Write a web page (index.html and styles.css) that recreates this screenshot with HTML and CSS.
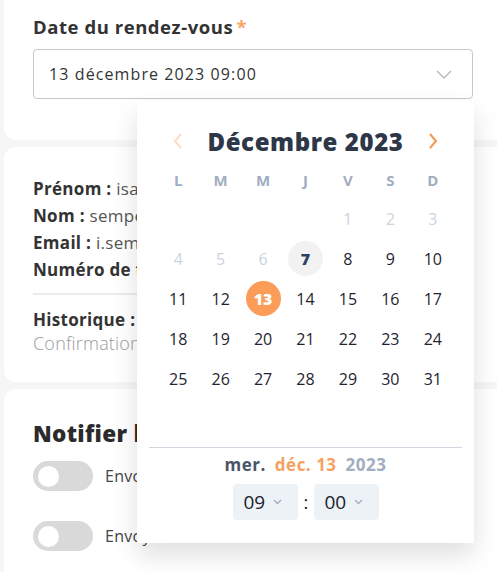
FILE: index.html
```html
<!DOCTYPE html>
<html lang="fr">

<head>
    <meta charset="UTF-8">
    <meta name="viewport" content="width=device-width, initial-scale=1.0">
    <title>Rendez-vous</title>

    <link rel="stylesheet" href="styles.css">
</head>

<body>
    <div class="page">
        <section class="card card-date">
            <div class="field-label">Date du rendez-vous <span class="req">*</span></div>
            <div class="datefield">
                <div class="date-input">
                    <span>13 décembre 2023 09:00</span>
                    <svg class="input-chevron" width="16" height="9" viewBox="0 0 16 9">
                        <path d="M1 1l7 7 7-7" fill="none" stroke="#b5b5b5" stroke-width="1.3" />
                    </svg>
                </div>

                <!-- calendrier -->
                <div class="picker">
                    <div class="picker-head">
                        <span class="nav nav-prev">
                            <svg width="12" height="18" viewBox="0 0 12 18">
                                <path d="M9 2L3 9l6 7" fill="none" stroke="currentColor" stroke-width="2" />
                            </svg>
                        </span>
                        <span class="month">Décembre 2023</span>
                        <span class="nav nav-next">
                            <svg width="12" height="18" viewBox="0 0 12 18">
                                <path d="M3 2l6 7-6 7" fill="none" stroke="currentColor" stroke-width="2" />
                            </svg>
                        </span>
                    </div>
                    <div class="weekdays">
                        <span>L</span><span>M</span><span>M</span><span>J</span><span>V</span><span>S</span><span>D</span>
                    </div>
                    <div class="days">
                        <span></span><span></span><span></span><span></span>
                        <span class="off">1</span><span class="off">2</span><span class="off">3</span>
                        <span class="off">4</span><span class="off">5</span><span class="off">6</span>
                        <span class="today">7</span><span>8</span><span>9</span><span>10</span>
                        <span>11</span><span>12</span><span class="selected">13</span><span>14</span><span>15</span><span>16</span><span>17</span>
                        <span>18</span><span>19</span><span>20</span><span>21</span><span>22</span><span>23</span><span>24</span>
                        <span>25</span><span>26</span><span>27</span><span>28</span><span>29</span><span>30</span><span>31</span>
                    </div>
                    <div class="picker-sep"></div>
                    <div class="picked">
                        <span class="p-day">mer.</span>
                        <span class="p-date">déc. 13</span>
                        <span class="p-year">2023</span>
                    </div>
                    <div class="time">
                        <div class="time-box">09
                            <svg width="9" height="6" viewBox="0 0 9 6">
                                <path d="M1 1l3.5 3.5L8 1" fill="none" stroke="#a0aec0" stroke-width="1.3" />
                            </svg>
                        </div>
                        <span class="colon">:</span>
                        <div class="time-box">00
                            <svg width="9" height="6" viewBox="0 0 9 6">
                                <path d="M1 1l3.5 3.5L8 1" fill="none" stroke="#a0aec0" stroke-width="1.3" />
                            </svg>
                        </div>
                    </div>
                </div>
            </div>
        </section>

        <section class="card card-info">
            <div class="info-row"><b>Prénom :</b> isabelle</div>
            <div class="info-row"><b>Nom :</b> semper</div>
            <div class="info-row"><b>Email :</b> i.semper@mail.fr</div>
            <div class="info-row"><b>Numéro de tél. :</b></div>
            <hr class="info-sep">
            <div class="info-row history"><b>Historique :</b></div>
            <div class="history-text">Confirmation</div>
        </section>

        <section class="card card-notify">
            <h2 class="notify-title">Notifier le client</h2>
            <div class="toggle-row">
                <span class="toggle"><span class="knob"></span></span>
                <span class="toggle-label">Envoyer un email</span>
            </div>
            <div class="toggle-row">
                <span class="toggle"><span class="knob"></span></span>
                <span class="toggle-label">Envoyer un SMS</span>
            </div>
        </section>
    </div>
</body>

</html>
```

FILE: styles.css
```css
* {
    padding: 0;
    margin: 0;
    box-sizing: border-box;
}

body {
    background-color: #f6f6f6;
    font-family: "Open Sans", "Liberation Sans", sans-serif;
    color: #333;
    overflow: hidden;
}

.page {
    padding-left: 4px;
    margin-right: -20px;
    display: flex;
    flex-direction: column;
    gap: 7px;
}

.card {
    background-color: #fff;
    border-radius: 12px;
    padding: 0 44px 0 29px;
}

/* date */
.card-date {
    height: 140px;
    padding-top: 15px;
    border-top-left-radius: 0;
    border-top-right-radius: 0;
}

.field-label {
    font-size: 18.5px;
    line-height: 24px;
    font-weight: 700;
    color: #333;
    letter-spacing: 0.55px;
    margin-bottom: 10px;
}

.req {
    color: #f7a364;
    margin-left: -2px;
}

.datefield {
    position: relative;
}

.date-input {
    height: 50px;
    border: 1px solid #c8c8c8;
    border-radius: 4px;
    display: flex;
    align-items: center;
    justify-content: space-between;
    padding: 0 20px 0 15px;
    font-size: 16px;
    letter-spacing: 1.1px;
    color: #333;
}

.picker {
    position: absolute;
    top: 52px;
    left: 104px;
    width: 337px;
    background-color: #fff;
    box-shadow: 0 12px 24px rgba(0, 0, 0, .13);
    padding: 20px 20px 23px;
    z-index: 2;
}

.picker-head {
    height: 40px;
    display: flex;
    align-items: center;
    justify-content: space-between;
}

.nav {
    width: 42px;
    display: flex;
    justify-content: center;
}

.nav-prev {
    color: #fcdcc6;
}

.nav-next {
    color: #f7954b;
}

.month {
    font-size: 24px;
    font-weight: 800;
    color: #2d3748;
    letter-spacing: 0.6px;
}

.weekdays,
.days {
    display: grid;
    grid-template-columns: repeat(7, 1fr);
}

.weekdays span {
    height: 38px;
    line-height: 38px;
    text-align: center;
    font-size: 15px;
    font-weight: 700;
    color: #a0aec0;
}

.days span {
    height: 40px;
    display: flex;
    align-items: center;
    justify-content: center;
    font-size: 16px;
    font-weight: 500;
    color: #1f2430;
}

.days .off {
    color: #cbd5e0;
}

.days .today,
.days .selected {
    width: 35px;
    height: 35px;
    margin: 2px auto;
    border-radius: 50%;
    font-weight: 800;
}

.days .today {
    background-color: #f2f2f2;
    color: #2a4365;
}

.days .selected {
    background-color: #fb9c58;
    color: #fff;
}

.picker-sep {
    height: 1px;
    background-color: #cfd6df;
    margin: 48px -8px 0;
}

.picked {
    text-align: center;
    font-size: 17px;
    line-height: 22px;
    font-weight: 700;
    letter-spacing: 0.5px;
    margin-top: 6px;
}

.p-day {
    color: #4a5568;
}

.p-date {
    color: #f8a062;
    margin: 0 4px;
}

.p-year {
    color: #a0aec0;
}

.time {
    display: flex;
    justify-content: center;
    align-items: center;
    gap: 6px;
    margin-top: 8px;
}

.time-box {
    width: 65px;
    height: 36px;
    border-radius: 4px;
    background-color: #edf2f7;
    display: flex;
    align-items: center;
    gap: 8px;
    padding-left: 11px;
    font-size: 19px;
    color: #1a202c;
}

.colon {
    font-size: 18px;
    color: #1a202c;
    width: 4px;
    text-align: center;
}

/* infos client */
.card-info {
    padding-top: 28px;
    padding-bottom: 28px;
}

.info-row {
    font-size: 17px;
    line-height: 27px;
    letter-spacing: 0.3px;
    color: #555;
    white-space: nowrap;
}

.info-row b {
    color: #333;
    font-weight: 700;
}

.info-sep {
    border: none;
    height: 2px;
    background-color: #ececec;
    margin: 10px 0 12px;
}

.history {
    line-height: 25px;
}

.history-text {
    font-size: 18px;
    line-height: 22px;
    letter-spacing: 0.2px;
    color: #9a9a9a;
    font-weight: 300;
    white-space: nowrap;
}

/* notifications */
.card-notify {
    padding-top: 30px;
    height: 200px;
    border-bottom-left-radius: 0;
}

.notify-title {
    font-size: 22.5px;
    line-height: 30px;
    font-weight: 800;
    letter-spacing: 0.3px;
    color: #2b2b2b;
    margin-bottom: 12px;
}

.toggle-row {
    display: flex;
    align-items: center;
    gap: 12px;
    margin-bottom: 30px;
}

.toggle {
    width: 60px;
    height: 30px;
    border-radius: 15px;
    background-color: #d9d9d9;
    display: flex;
    align-items: center;
    padding-left: 5px;
}

.knob {
    width: 21px;
    height: 21px;
    border-radius: 50%;
    background-color: #fff;
}

.toggle-label {
    font-size: 16px;
    letter-spacing: 0.3px;
    color: #444;
    white-space: nowrap;
}
```
